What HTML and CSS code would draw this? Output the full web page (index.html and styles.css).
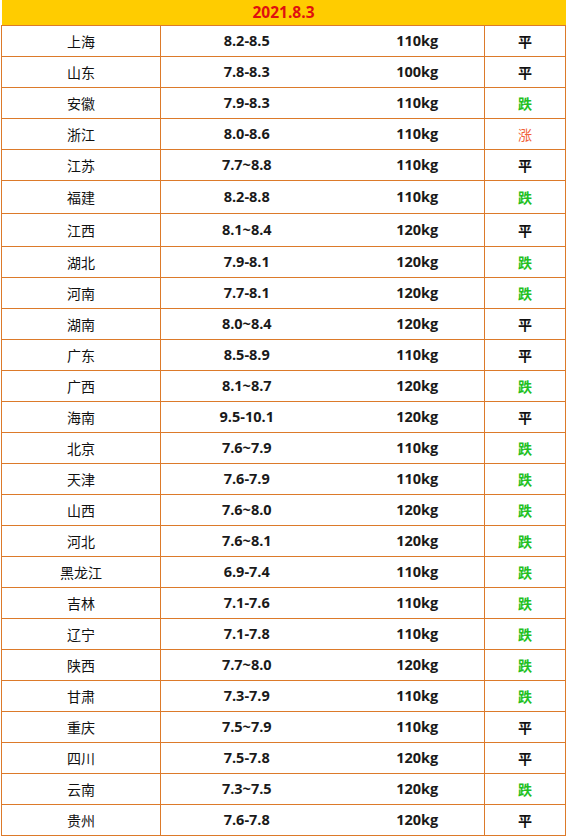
FILE: index.html
```html
<!DOCTYPE html>
<html lang="zh">
<head>
<meta charset="utf-8">
<title>2021.8.3</title>
<link rel="stylesheet" href="styles.css">
</head>
<body>
<table class="price-table">
  <colgroup>
    <col class="c-region"><col class="c-range"><col class="c-weight"><col class="c-trend">
  </colgroup>
  <thead>
    <tr><th colspan="4" class="date">2021.8.3</th></tr>
  </thead>
  <tbody>
    <tr><td class="region">上海</td><td class="range">8.2-8.5</td><td class="weight">110kg</td><td class="trend flat">平</td></tr>
    <tr><td class="region">山东</td><td class="range">7.8-8.3</td><td class="weight">100kg</td><td class="trend flat">平</td></tr>
    <tr><td class="region">安徽</td><td class="range">7.9-8.3</td><td class="weight">110kg</td><td class="trend down">跌</td></tr>
    <tr><td class="region">浙江</td><td class="range">8.0-8.6</td><td class="weight">110kg</td><td class="trend up">涨</td></tr>
    <tr><td class="region">江苏</td><td class="range">7.7~8.8</td><td class="weight">110kg</td><td class="trend flat">平</td></tr>
    <tr class="tall"><td class="region">福建</td><td class="range">8.2-8.8</td><td class="weight">110kg</td><td class="trend down">跌</td></tr>
    <tr class="tall"><td class="region">江西</td><td class="range">8.1~8.4</td><td class="weight">120kg</td><td class="trend flat">平</td></tr>
    <tr><td class="region">湖北</td><td class="range">7.9-8.1</td><td class="weight">120kg</td><td class="trend down">跌</td></tr>
    <tr><td class="region">河南</td><td class="range">7.7-8.1</td><td class="weight">120kg</td><td class="trend down">跌</td></tr>
    <tr><td class="region">湖南</td><td class="range">8.0~8.4</td><td class="weight">120kg</td><td class="trend flat">平</td></tr>
    <tr><td class="region">广东</td><td class="range">8.5-8.9</td><td class="weight">110kg</td><td class="trend flat">平</td></tr>
    <tr><td class="region">广西</td><td class="range">8.1~8.7</td><td class="weight">120kg</td><td class="trend down">跌</td></tr>
    <tr><td class="region">海南</td><td class="range">9.5-10.1</td><td class="weight">120kg</td><td class="trend flat">平</td></tr>
    <tr><td class="region">北京</td><td class="range">7.6~7.9</td><td class="weight">110kg</td><td class="trend down">跌</td></tr>
    <tr><td class="region">天津</td><td class="range">7.6-7.9</td><td class="weight">110kg</td><td class="trend down">跌</td></tr>
    <tr><td class="region">山西</td><td class="range">7.6~8.0</td><td class="weight">120kg</td><td class="trend down">跌</td></tr>
    <tr><td class="region">河北</td><td class="range">7.6~8.1</td><td class="weight">120kg</td><td class="trend down">跌</td></tr>
    <tr><td class="region">黑龙江</td><td class="range">6.9-7.4</td><td class="weight">110kg</td><td class="trend down">跌</td></tr>
    <tr><td class="region">吉林</td><td class="range">7.1-7.6</td><td class="weight">110kg</td><td class="trend down">跌</td></tr>
    <tr><td class="region">辽宁</td><td class="range">7.1-7.8</td><td class="weight">110kg</td><td class="trend down">跌</td></tr>
    <tr><td class="region">陕西</td><td class="range">7.7~8.0</td><td class="weight">120kg</td><td class="trend down">跌</td></tr>
    <tr><td class="region">甘肃</td><td class="range">7.3-7.9</td><td class="weight">110kg</td><td class="trend down">跌</td></tr>
    <tr><td class="region">重庆</td><td class="range">7.5~7.9</td><td class="weight">110kg</td><td class="trend flat">平</td></tr>
    <tr><td class="region">四川</td><td class="range">7.5-7.8</td><td class="weight">120kg</td><td class="trend flat">平</td></tr>
    <tr><td class="region">云南</td><td class="range">7.3~7.5</td><td class="weight">120kg</td><td class="trend down">跌</td></tr>
    <tr><td class="region">贵州</td><td class="range">7.6-7.8</td><td class="weight">120kg</td><td class="trend flat">平</td></tr>
  </tbody>
</table>
</body>
</html>
```

FILE: styles.css
```css
html, body {
  margin: 0;
  padding: 0;
  background: #ffffff;
}

body {
  padding-left: 1px;
  font-family: "Noto Sans CJK SC", "Noto Sans", sans-serif;
  color: #1a1a1a;
}

.price-table {
  border-collapse: collapse;
  table-layout: fixed;
  width: 564px;
}

.c-region { width: 159px; }
.c-range { width: 172px; }
.c-weight { width: 152px; }
.c-trend { width: 81px; }

.date {
  height: 25px;
  padding: 0;
  background: #ffcc00;
  color: #e0100f;
  font-family: "Open Sans", "Noto Sans CJK SC", sans-serif;
  font-weight: 700;
  font-size: 15.5px;
  text-align: center;
  border: none;
  border-bottom: 1px solid #dc7a2a;
  line-height: 25px;
}

.price-table td {
  height: 30px;
  padding: 0;
  border: 1px solid #dc7a2a;
  text-align: center;
  vertical-align: middle;
  font-size: 14px;
  line-height: 18px;
}

.price-table tr.tall td {
  height: 32px;
}

.price-table td.range {
  border-right: none;
  font-family: "Open Sans", "Noto Sans CJK SC", sans-serif;
  font-weight: 700;
  font-size: 14.5px;
}

.price-table td.weight {
  border-left: none;
  padding-left: 18px;
  font-family: "Open Sans", "Noto Sans CJK SC", sans-serif;
  font-weight: 700;
  font-size: 14.5px;
}

.region {
  color: #111111;
}

.trend {
  font-weight: 700;
}

.trend.flat { color: #111111; }
.trend.down { color: #22c022; }
.trend.up { color: #f0623a; font-weight: 400; }
```
